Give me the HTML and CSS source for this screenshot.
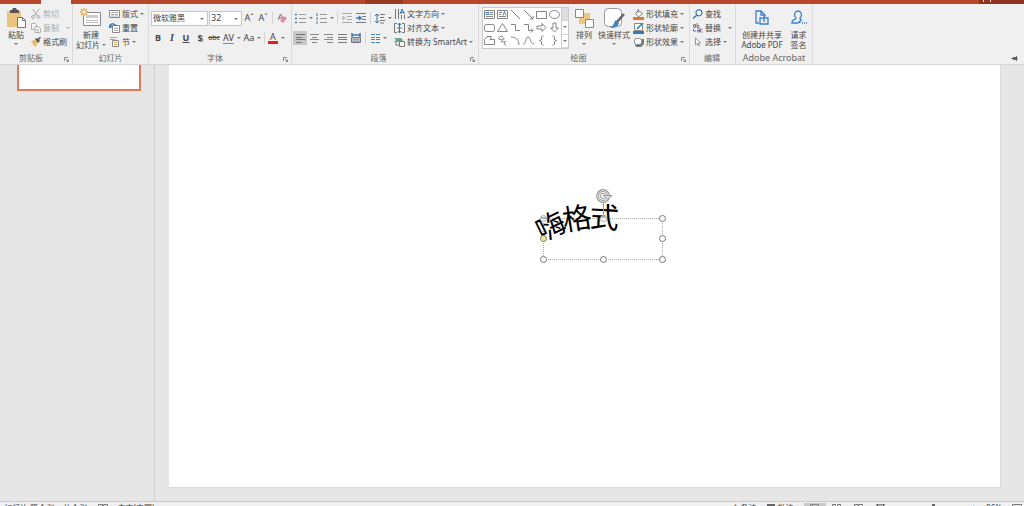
FILE: index.html
```html
<!DOCTYPE html>
<html lang="zh-CN">
<head>
<meta charset="utf-8">
<title>演示文稿</title>
<link rel="stylesheet" href="styles.css">
</head>
<body>
<div class="app">
  <div class="tabs"><span class="tab-gap"></span><span class="tab-active"></span><span class="tab-fill"></span><span class="tab-context"></span><span class="tab-rest"></span><span class="tab-user"><i></i><i></i></span></div>
  <header class="ribbon">
    <section class="group g-clip">
      <div class="body">
        <button class="big paste"><svg width="20" height="20" viewBox="0 0 20 20"><path fill="#edc27c" d="M1 3h14v16H1z"/><path fill="#555" d="M4 2h2l1-2h3l1 2h2v3H4z"/><path fill="#fff" stroke="#777" d="M11.500 9.500h5l3 3v7h-8z"/><path fill="none" stroke="#777" d="M16.500 9.500v3h3"/></svg><span>粘贴</span><i class="arr"></i></button>
        <div class="col">
          <button class="row off"><svg width="10" height="10" viewBox="0 0 10 10"><g fill="none" stroke="#aaa"><path d="M1.500 0l5 7M8 0L3 7"/><circle cx="2" cy="8" r="1.400"/><circle cx="7.500" cy="8" r="1.400"/></g></svg><span>剪切</span></button>
          <button class="row off"><svg width="10" height="10" viewBox="0 0 10 10"><g fill="#f4f4f4" stroke="#b0b0b0"><path d="M.5.5h4l1 1v5h-5z"/><path d="M4 3.500h3.500l2 2v4H4z"/><path d="M5.500 6h2M5.500 7.800h2.500"/></g></svg><span>复制</span><i class="arr far"></i></button>
          <button class="row"><svg width="10" height="10" viewBox="0 0 10 10"><path fill="#edb968" d="M0 4l4-1 3 3-3 4z"/><path fill="#555" d="M4 2l2-1 3 3-2 2z"/><path stroke="#555" stroke-width="1.500" d="M7 3l2.500-3"/></svg><span>格式刷</span></button>
        </div>
      </div>
      <div class="label">剪贴板</div><button class="launch" aria-label="剪贴板设置"><svg width="5" height="5" viewBox="0 0 5 5"><path fill="none" stroke="#888" d="M.5 4V.5H4M2 2l2.500 2.500M4.500 2.500v2h-2"/></svg></button>
    </section>
    <section class="group g-slide">
      <div class="body">
        <button class="big newslide"><svg width="22" height="20" viewBox="0 0 22 20"><path fill="#fff" stroke="#888" d="M3.500 4.500h17v13h-17z"/><path fill="#ccc" d="M6 7h12v3H6z"/><path stroke="#bbb" d="M6 12.500h12M6 14.500h12"/><path stroke="#eda94d" stroke-width="1.300" d="M4 0v8M0 4h8M1 1l6 6M7 1L1 7"/><circle cx="4" cy="4" r="1.600" fill="#fff"/></svg><span>新建</span><span class="inline">幻灯片<i class="arr"></i></span></button>
        <div class="col">
          <button class="row"><svg width="11" height="10" viewBox="0 0 11 10"><path fill="#fff" stroke="#888" d="M.5 1.500h10v7H.5z"/><path stroke="#aaa" d="M2 3.500h7M2 5.500h3M6 5.500h3M2 7h3M6 7h3"/></svg><span>版式</span><i class="arr"></i></button>
          <button class="row"><svg width="11" height="10" viewBox="0 0 11 10"><path fill="#fff" stroke="#888" d="M3.500 2.500h7v7h-7z"/><path stroke="#aaa" d="M5 5.500h4M5 7.500h4"/><path fill="none" stroke="#2b78b8" stroke-width="1.300" d="M1 4c0-4 5-4 6-1M0 2l1 2.500L3.500 3"/></svg><span>重置</span></button>
          <button class="row"><svg width="11" height="10" viewBox="0 0 11 10"><path fill="none" stroke="#e89a4a" d="M1 .5h7M1 2.500h5"/><path fill="#fff" stroke="#888" d="M3.500 3.500h6v6h-6z"/><path stroke="#e0a060" d="M5 5.500h3M5 7.500h3"/></svg><span>节</span><i class="arr"></i></button>
        </div>
      </div>
      <div class="label">幻灯片</div>
    </section>
    <section class="group g-font">
      <div class="lines">
        <div class="line">
          <label class="combo name"><select aria-label="字体"><option>微软雅黑</option></select><i class="arr"></i></label>
          <label class="combo size"><select aria-label="字号"><option>32</option></select><i class="arr"></i></label>
          <button class="tool w14 grow">A<sup>ˆ</sup></button><button class="tool w14 grow">A<sup>ˇ</sup></button><i class="sep"></i>
          <button class="tool w14" aria-label="清除格式"><svg width="9" height="11" viewBox="0 0 9 11"><path fill="none" stroke="#777" d="M0 7l2.500-6L5 6M1 5h3"/><path fill="#e58aa0" d="M2 8l4-5 3 2-4 5z"/></svg></button>
        </div>
        <div class="line second">
          <button class="tool w14"><b>B</b></button><button class="tool w14 serif"><b><em>I</em></b></button><button class="tool w14"><b><u>U</u></b></button><button class="tool w14 shadow"><b>S</b></button><button class="tool w14 small"><s>abc</s></button>
          <button class="tool spacing"><span class="wide">AV</span><i class="arr"></i></button><button class="tool w20">Aa<i class="arr"></i></button><i class="sep"></i><button class="tool w20"><span class="color">A</span><i class="arr"></i></button>
        </div>
      </div>
      <div class="label">字体</div><button class="launch" aria-label="字体设置"><svg width="5" height="5" viewBox="0 0 5 5"><path fill="none" stroke="#888" d="M.5 4V.5H4M2 2l2.500 2.500M4.500 2.500v2h-2"/></svg></button>
    </section>
    <section class="group g-para">
      <div class="split">
        <div class="lines">
          <div class="line">
            <button class="tool w21" aria-label="项目符号"><svg width="11" height="11" viewBox="0 0 11 11"><path stroke="#3d79b5" stroke-width="1.500" d="M0 1.500h2M0 5.500h2M0 9.500h2"/><path stroke="#999" d="M4 1.500h7M4 5.500h7M4 9.500h7"/></svg><i class="arr"></i></button>
            <button class="tool w21" aria-label="编号"><svg width="11" height="11" viewBox="0 0 11 11"><path stroke="#3d79b5" d="M1 0v3M1 4v3M1 8v3"/><path stroke="#999" d="M4 1.500h7M4 5.500h7M4 9.500h7"/></svg><i class="arr"></i></button><i class="sep"></i>
            <button class="tool w14" aria-label="减少缩进"><svg width="10" height="10" viewBox="0 0 10 10"><path stroke="#aaa" fill="none" d="M0 .5h10M5 3.500h5M5 6.500h5M0 9.500h10M4 5H0l2-2M0 5l2 2"/></svg></button>
            <button class="tool w14" aria-label="增加缩进"><svg width="10" height="10" viewBox="0 0 10 10"><path stroke="#777" d="M0 .5h10M6 3.500h4M6 6.500h4M0 9.500h10"/><path stroke="#2b78b8" fill="none" stroke-width="1.300" d="M0 5h5L3 3M5 5L3 7"/></svg></button><i class="sep"></i>
            <button class="tool w21" aria-label="行距"><svg width="10" height="11" viewBox="0 0 10 11"><path stroke="#2b78b8" fill="none" d="M2 1v9M0 3l2-2 2 2M0 8l2 2 2-2"/><path stroke="#777" d="M5 1.500h5M5 4.500h4M5 7.500h5M5 10h4"/></svg><i class="arr"></i></button>
          </div>
          <div class="line second">
            <button class="tool w14 pressed" aria-label="左对齐"><svg width="9" height="9" viewBox="0 0 9 9"><path stroke="#777" d="M0 .5h9M0 3.500h6M0 5.500h9M0 8.500h6"/></svg></button>
            <button class="tool w14" aria-label="居中"><svg width="9" height="9" viewBox="0 0 9 9"><path stroke="#888" d="M0 .5h9M2 3.500h5M0 5.500h9M2 8.500h5"/></svg></button>
            <button class="tool w14" aria-label="右对齐"><svg width="9" height="9" viewBox="0 0 9 9"><path stroke="#888" d="M0 .5h9M3 3.500h6M0 5.500h9M3 8.500h6"/></svg></button>
            <button class="tool w14" aria-label="两端对齐"><svg width="9" height="9" viewBox="0 0 9 9"><path stroke="#777" d="M0 .5h9M0 3.500h9M0 5.500h9M0 8.500h9"/></svg></button>
            <button class="tool w14" aria-label="分散对齐"><svg width="10" height="10" viewBox="0 0 10 10"><path stroke="#3d79b5" stroke-width="1.500" d="M1 0v4M9 0v4M1 2h8"/><path fill="#b9bec5" stroke="#778" d="M.5 4.500h9v5h-9z"/><path stroke="#99a" d="M2 6.500h6M2 8.500h6"/></svg></button><i class="sep"></i>
            <button class="tool w21" aria-label="分栏"><svg width="9" height="9" viewBox="0 0 9 9"><path stroke="#5483b0" d="M0 .5h4M5 .5h4M0 3.500h4M5 3.500h4M0 5.500h4M5 5.500h4M0 8.500h4M5 8.500h4"/></svg><i class="arr"></i></button>
          </div>
        </div>
        <div class="col">
          <button class="row"><svg width="11" height="12" viewBox="0 0 11 12"><path stroke="#777" d="M1.500 1v10M4.500 1v10M7.500 7v4M10.500 7v4"/><path fill="none" stroke="#2b78b8" d="M6 6l2-5 2.500 5M7 4.500h3"/></svg><span>文字方向</span><i class="arr"></i></button>
          <button class="row"><svg width="11" height="12" viewBox="0 0 11 12"><path fill="none" stroke="#777" d="M3 1.500H.5v9H3M8 1.500h2.500v9H8"/><path fill="none" stroke="#2b78b8" d="M5.500 1v10M4 3l1.500-2L7 3M4 9l1.500 2L7 9"/><path stroke="#777" d="M3 6h5"/></svg><span>对齐文本</span><i class="arr"></i></button>
          <button class="row"><svg width="11" height="10" viewBox="0 0 11 10"><path fill="#69a58a" d="M0 1h7l2 2-2 2H0l2-2z"/><path fill="#fff" stroke="#777" d="M5.500 4.500h5v5h-5z"/><path stroke="#777" fill="none" d="M2 5v3h3"/></svg><span>转换为 SmartArt</span><i class="arr"></i></button>
        </div>
      </div>
      <div class="label">段落</div><button class="launch" aria-label="段落设置"><svg width="5" height="5" viewBox="0 0 5 5"><path fill="none" stroke="#888" d="M.5 4V.5H4M2 2l2.500 2.500M4.500 2.500v2h-2"/></svg></button>
    </section>
    <section class="group g-draw">
      <div class="body">
        <div class="gallery">
          <div class="shapes">
            <svg viewBox="0 0 13 13"><path d="M1.500 2.500h10v8h-10zM7 4.500h3M7 6.500h3M3 8.500h7"/><path class="blue" d="M3 4.500h3v2H3z"/></svg>
            <svg viewBox="0 0 13 13"><path d="M1.500 2.500h10v8h-10zM3 4.500h3M3 6.500h2M3 8.500h7"/><path class="blue" d="M7 7.500l1.500-4 1.500 4"/></svg>
            <svg viewBox="0 0 13 13"><path d="M2 2l9 9"/></svg>
            <svg viewBox="0 0 13 13"><path d="M2 2l9 9M11 8v3H8"/></svg>
            <svg viewBox="0 0 13 13"><path d="M1.500 3.500h10v7h-10z"/></svg>
            <svg viewBox="0 0 13 13"><ellipse cx="6.500" cy="6.500" rx="5" ry="4"/></svg>
            <svg viewBox="0 0 13 13"><rect x="1.500" y="3.500" width="10" height="7" rx="2"/></svg>
            <svg viewBox="0 0 13 13"><path d="M6.500 2.500l5 8h-10z"/></svg>
            <svg viewBox="0 0 13 13"><path d="M2 3.500h4.500v6H11"/></svg>
            <svg viewBox="0 0 13 13"><path d="M2 3.500h4.500v6H11M9 7.500l2 2-2 2"/></svg>
            <svg viewBox="0 0 13 13"><path d="M2 5h5V2.500L11 6.500l-4 4V8H2z"/></svg>
            <svg viewBox="0 0 13 13"><path d="M5 2h3v5h2.500l-4 4-4-4H5z"/></svg>
            <svg viewBox="0 0 13 13"><path d="M4 2.500h4.500L7 5.500h4.500v5h-10v-5z"/></svg>
            <svg viewBox="0 0 13 13"><path d="M7 2.500C4 1 1 5 4 5.500s4-3 4-1-5 3-2 3.500 4-2 3 0-1 3 1 3"/></svg>
            <svg viewBox="0 0 13 13"><path d="M2 3c5 0 8 3 8 8"/></svg>
            <svg viewBox="0 0 13 13"><path d="M1 10c4 0 2-7 5-7s2 7 6 7"/></svg>
            <svg viewBox="0 0 13 13"><path d="M8.500 2H7.500L6.500 3v2.500l-2 1 2 1V10l1 1h1"/></svg>
            <svg viewBox="0 0 13 13"><path d="M4.500 2h1l1 1v2.500l2 1-2 1V10l-1 1h-1"/></svg>
          </div>
          <div class="scroller"><button aria-label="上移"></button><button aria-label="下移"><i class="arr"></i></button><button aria-label="更多"><i class="arr more"></i></button></div>
        </div>
        <button class="big arrange"><svg width="20" height="20" viewBox="0 0 20 20"><path fill="#f0c57e" d="M9 5h7v7H9zM5 9h7v7H5z"/><path fill="#fff" stroke="#888" d="M1.500 1.500h8v8h-8zM11.500 11.500h8v8h-8z"/></svg><span>排列</span><i class="arr"></i></button>
        <button class="big quick"><svg width="22" height="20" viewBox="0 0 22 20"><rect x="1.500" y=".5" width="17" height="18" rx="4" fill="#fff" stroke="#999"/><path stroke="#666" stroke-width="2.500" d="M21 6l-7 8"/><path fill="#4684bd" d="M13 12l3 3c-1 4-4 5-9 5 4-2 3-5 6-8z"/></svg><span>快速样式</span><i class="arr"></i></button>
        <div class="col">
          <button class="row"><svg width="11" height="11" viewBox="0 0 11 11"><path fill="#fff" stroke="#777" d="M5.500 1.500l4 3-4 3.500-3-3.500zM5 0v4"/><path fill="#e67528" d="M0 8h11v3H0z"/></svg><span>形状填充</span><i class="arr"></i></button>
          <button class="row"><svg width="11" height="11" viewBox="0 0 11 11"><path fill="#fff" stroke="#888" d="M1.500.5h8v7h-8z"/><path stroke="#2b78b8" stroke-width="1.500" d="M10 0L4 6"/><path fill="#3579b5" d="M0 8h11v3H0z"/></svg><span>形状轮廓</span><i class="arr"></i></button>
          <button class="row"><svg width="11" height="11" viewBox="0 0 11 11"><path fill="#777" d="M2 8l7-6h2v5l-3 3H3z"/><rect x="1.500" y="1.500" width="7" height="6" rx="2" fill="#fff" stroke="#888"/></svg><span>形状效果</span><i class="arr"></i></button>
        </div>
      </div>
      <div class="label">绘图</div><button class="launch" aria-label="绘图设置"><svg width="5" height="5" viewBox="0 0 5 5"><path fill="none" stroke="#888" d="M.5 4V.5H4M2 2l2.500 2.500M4.500 2.500v2h-2"/></svg></button>
    </section>
    <section class="group g-edit">
      <div class="body">
        <div class="col">
          <button class="row"><svg width="10" height="10" viewBox="0 0 10 10"><circle cx="6" cy="3.800" r="3" fill="#fff" stroke="#3d79b5" stroke-width="1.200"/><path stroke="#3d79b5" stroke-width="1.500" d="M4 6L0 9.500"/></svg><span>查找</span></button>
          <button class="row"><svg width="10" height="10" viewBox="0 0 10 10"><g fill="none" stroke="#666" stroke-width=".8"><path d="M.5 1.500h2v3h-2v-2h2M4 0v4.500h2v-2H4"/></g><g fill="none" stroke="#865cab" stroke-width=".9"><path d="M4.500 6h2v3h-2V7.500h2M9.500 6h-2v3h2"/></g><path fill="none" stroke="#3d79b5" d="M.5 6v2H3"/></svg><span>替换</span><i class="arr far"></i></button>
          <button class="row"><svg width="10" height="10" viewBox="0 0 10 10"><path fill="#fff" stroke="#888" stroke-width=".9" d="M2.500.8v7l1.800-1.500L5.500 9l1-.5-1-2.500h2z"/></svg><span>选择</span><i class="arr"></i></button>
        </div>
      </div>
      <div class="label">编辑</div>
    </section>
    <section class="group g-adobe">
      <div class="body">
        <button class="big"><svg width="14" height="16" viewBox="0 0 14 16"><g fill="none" stroke="#377fce" stroke-width="1.300"><path d="M4 13H1V1h5l4 4v2M6 1v4h4"/><path d="M7 8H5v6h8V8h-2M9 12V7M7.500 8.500L9 7l1.500 1.500"/></g></svg><span>创建并共享</span><span>Adobe PDF</span></button>
        <button class="big"><svg width="16" height="16" viewBox="0 0 16 16"><g fill="none" stroke="#377fce" stroke-width="1.300"><path d="M7 13H1v-1c0-3 4-2 4-4-3-3-1-7 2-7s5 4 2 7c0 1 1 2 2 2M7 13l2-2v2M11 13h1M13 13h1M15 13h1"/></g></svg><span>请求</span><span>签名</span></button>
      </div>
      <div class="label latin">Adobe Acrobat</div>
    </section>
    <button class="pin" aria-label="固定功能区"><svg width="7" height="5" viewBox="0 0 7 5"><path fill="#666" d="M0 2h2V1h3V0h1v5H5V4H2V3H0zM6 2h1v1H6z"/></svg></button>
  </header>
  <main class="work">
    <aside class="thumbs"><div class="thumb"></div></aside>
    <div class="stage">
      <div class="slide">
        <div class="textbox">
          <div class="art"><span class="c1">嗨</span><span class="c2">格</span><span class="c3">式</span></div>
          <i class="stem"></i>
          <i class="h h-tl sq"></i><i class="h h-t sq"></i><i class="h h-tr"></i><i class="h h-l adj"></i><i class="h h-r"></i><i class="h h-bl"></i><i class="h h-b"></i><i class="h h-br"></i>
          <svg class="rotate" width="18" height="14" viewBox="0 0 18 14"><circle cx="7" cy="7" r="6.300" fill="#fff" stroke="#999" stroke-width="1.200"/><path fill="none" stroke="#999" stroke-width="3" d="M9 9.800a3.500 3.500 0 1 1 1.500-3.300"/><path fill="none" stroke="#eee" stroke-width="1.200" d="M9 9.800a3.500 3.500 0 1 1 1.500-3.300"/><path fill="#ddd" stroke="#999" d="M7 6.500h9l-4.500 4z"/></svg>
        </div>
      </div>
    </div>
  </main>
  <footer class="status">
    <span>幻灯片 第 1 张，共 1 张</span>
    <svg width="10" height="9" viewBox="0 0 10 9"><path fill="none" stroke="#777" d="M.5.5h4v7h-4zM5.500.5h4v7h-4z"/></svg>
    <span>中文(中国)</span>
    <span class="space"></span>
    <button class="sb">≜ 备注</button><button class="sb"><i class="note"></i>批注</button>
    <div class="views">
    <button class="view on" aria-label="普通"><svg width="9" height="9" viewBox="0 0 9 9"><path fill="none" stroke="#888" d="M.5.5h8v7h-8zM2.500.5v7"/></svg></button>
    <button class="view" aria-label="浏览"><svg width="9" height="9" viewBox="0 0 9 9"><path fill="none" stroke="#777" d="M.5.5h3v3h-3zM5.500.5h3v3h-3zM.5 5.500h3v3h-3zM5.500 5.500h3v3h-3z"/></svg></button>
    <button class="view" aria-label="阅读"><svg width="9" height="9" viewBox="0 0 9 9"><path fill="none" stroke="#777" d="M.5.5h3.500v7H.5zM4.500.5h4v7h-4z"/></svg></button>
    <button class="view" aria-label="放映"><svg width="9" height="9" viewBox="0 0 9 9"><path fill="none" stroke="#555" d="M0 .8h9M1.500 1v4h6V1"/></svg></button>
    </div>
    <span class="zoom"><i></i></span><span>+</span><span>96%</span>
    <svg width="10" height="9" viewBox="0 0 10 9"><path fill="none" stroke="#777" d="M.5.5h9v7h-9zM3 4h4"/></svg>
  </footer>
</div>
</body>
</html>
```
FILE: styles.css
```css
* { box-sizing: border-box; }
body {
  margin: 0;
  height: 100vh;
  overflow: hidden;
  background: #e6e6e6;
  color: #444;
  font: 8px/10px "Noto Sans", "Noto Sans CJK SC", sans-serif;
}
button {
  margin: 0;
  padding: 0;
  border: 0;
  background: none;
  color: inherit;
  font: inherit;
  white-space: nowrap;
}
svg { display: block; flex: none; }
.app { display: flex; flex-direction: column; height: calc(100vh + 12px); }

.tabs { display: flex; flex: none; height: 4px; background: #b7472a; }
.tab-gap { width: 41px; }
.tab-active { width: 30px; background: #f0f0f0; }
.tab-fill { width: 294px; }
.tab-context { width: 38px; background: #983a22; }
.tab-rest { flex: 1; }
.tab-user { display: flex; justify-content: center; gap: 6px; width: 45px; padding-right: 30px; background: #8d351e; }
.tab-user i { flex: none; width: 1px; height: 2px; background: #ffd9cc; }

.ribbon { display: flex; flex: none; height: 61px; background: #f0f0f0; border-bottom: 1px solid #d5d5d5; }
.group { position: relative; display: flex; flex-direction: column; flex: none; border-right: 1px solid #dadada; }
.body { display: flex; height: 48px; padding-top: 3px; }
.label { height: 12px; line-height: 12px; text-align: center; color: #666; }
.latin { font-size: 9px; }
.launch { position: absolute; right: 3px; bottom: 2px; }
.g-clip { width: 73px; padding-left: 4px; }
.g-clip .label { padding-right: 14px; }
.g-slide { width: 76px; padding-left: 3px; }
.g-slide .label { padding-right: 3px; }
.g-font { width: 143px; padding-left: 2px; }
.g-font .label { padding-right: 12px; }
.g-para { width: 187px; padding-left: 1px; }
.g-para .label { padding-right: 14px; }
.g-draw { width: 211px; padding-left: 3px; }
.g-draw .label { padding-right: 14px; }
.g-edit { width: 46px; padding-left: 3px; }
.g-edit .label { padding-right: 4px; }
.g-adobe { width: 77px; }

.arr { display: block; flex: none; border: 2px solid transparent; border-top-color: #777; border-bottom: 0; }
.far { margin-left: 5px; }
.off { color: #a8a8a8; }
.off .arr { border-top-color: #b8b8b8; }
.col { display: flex; flex-direction: column; }
.row { display: flex; align-items: center; gap: 2px; height: 14px; }
.big { display: flex; flex-direction: column; align-items: center; height: 41px; padding-top: 1px; }
.big svg { margin-bottom: 2px; }
.big .arr { margin-top: 3px; }
.inline { display: flex; align-items: center; gap: 2px; }
.big .inline .arr { margin-top: 0; }
.paste { width: 24px; margin-right: 3px; }
.newslide { width: 30px; margin-right: 3px; }
.g-adobe .body { justify-content: center; gap: 8px; }
.g-adobe .big { padding-top: 3px; }
.g-adobe .big svg { margin-bottom: 4px; }

.split { display: flex; height: 48px; padding-top: 3px; }
.lines { flex: none; height: 48px; padding-top: 4px; }
.split .lines { width: 101px; padding-top: 1px; }
.line { display: flex; align-items: center; height: 20px; }
.combo { position: relative; display: flex; align-items: center; flex: none; height: 15px; border: 1px solid #c6c6c6; background: #fff; }
.combo select { width: 100%; height: 13px; padding: 0 1px; border: 0; appearance: none; background: none; color: #444; font: inherit; }
.combo .arr { position: absolute; right: 3px; top: 6px; }
.name { width: 57px; margin-right: 1px; }
.size { width: 33px; }
.size select { font-size: 9px; }
.tool { display: flex; align-items: center; justify-content: center; flex: none; gap: 3px; height: 14px; font-size: 9px; }
.grow { gap: 0; }
.w14 { width: 14px; }
.w20 { width: 19px; }
.w21 { width: 21px; }
.tool sup { font-size: 8px; line-height: 6px; }
.tool.small { font-size: 7px; }
.tool.serif { font-family: "Liberation Serif", serif; font-size: 10px; }
.shadow { text-shadow: 1px 1px 1px #999; }
.spacing { width: 22px; }
.wide { height: 11px; line-height: 9px; border-bottom: 1px solid #5b93c6; }
.color { height: 11px; line-height: 8px; padding: 0 2px; border-bottom: 3px solid #e02020; }
.sep { flex: none; width: 1px; height: 12px; margin: 0 2px; background: #d4d4d4; }
.pressed { background: #c8c8c8; }

.gallery { display: flex; width: 87px; height: 42px; border: 1px solid #c9c9c9; background: #fff; margin: 0 5px 0 0; }
.shapes { display: grid; grid-template-columns: repeat(6, 13px); grid-auto-rows: 13px; width: 78px; }
.shapes svg { width: 13px; height: 13px; fill: none; stroke: #777; stroke-width: 0.9; }
.shapes .blue { stroke: #3d79b5; }
.scroller { display: flex; flex-direction: column; flex: 1; }
.scroller button { display: flex; align-items: center; justify-content: center; flex: 1; border-left: 1px solid #c9c9c9; border-bottom: 1px solid #d5d5d5; }
.scroller button:first-child { background: #dedede; }
.arrange { width: 20px; margin-right: 4px; }
.quick { width: 32px; margin-right: 3px; }
.pin { align-self: flex-end; margin: 0 6px 3px auto; }

.work { display: flex; flex: 1; min-height: 0; }
.thumbs { flex: none; width: 155px; padding: 0 13px 0 17px; border-right: 1px solid #cfcfcf; }
.thumb { height: 26px; border: 2px solid #e2795b; border-top: 0; background: #fff; }
.stage { display: flex; flex: 1; padding: 0 23px 13px 14px; }
.slide { position: relative; flex: 1; background: #fff; border-right: 1px solid #dadada; border-bottom: 1px solid #dadada; }
.textbox { position: absolute; left: 45%; top: 36.3%; width: 120px; height: 42px; border: 1px dotted #aaa; }
.art span { position: absolute; color: #000; font: 29px/28px "Noto Sans CJK SC", sans-serif; }
.c1 { left: -9px; top: -9px; transform: rotate(-26deg); }
.c2 { left: 18px; top: -17px; transform: rotate(-9deg); }
.c3 { left: 46px; top: -18px; transform: rotate(3deg); }
.stem { position: absolute; left: 59px; top: -17px; width: 1px; height: 14px; background: #999; }
.h { position: absolute; width: 7px; height: 7px; border: 1px solid #777; border-radius: 4px; background: #fff; }
.sq { border-color: #aaa; background: #ffffffaa; }
.adj { background: #f1e890; }
.h-tl { left: -4px; top: -4px; }
.h-t { left: 56px; top: -4px; }
.h-tr { right: -4px; top: -4px; }
.h-l { left: -4px; top: 16px; }
.h-r { right: -4px; top: 16px; }
.h-bl { left: -4px; bottom: -4px; }
.h-b { left: 56px; bottom: -4px; }
.h-br { right: -4px; bottom: -4px; }
.rotate { position: absolute; left: 52px; top: -30px; }

.status { display: flex; align-items: flex-start; flex: none; gap: 10px; height: 17px; padding: 1px 2px 0 4px; border-top: 1px solid #cacaca; background: #f0f0f0; }
.status > svg { margin-top: 1px; }
.space { flex: 1; }
.sb { display: flex; gap: 3px; }
.note { width: 8px; height: 6px; margin-top: 1px; background: #666; }
.views { display: flex; }
.view { display: flex; justify-content: center; width: 22px; padding-top: 1px; }
.on { height: 14px; background: #c9c9c9; }
.zoom { width: 60px; height: 10px; }
.zoom i { display: block; width: 3px; height: 7px; margin: 1px 0 0 30px; background: #666; }
```
